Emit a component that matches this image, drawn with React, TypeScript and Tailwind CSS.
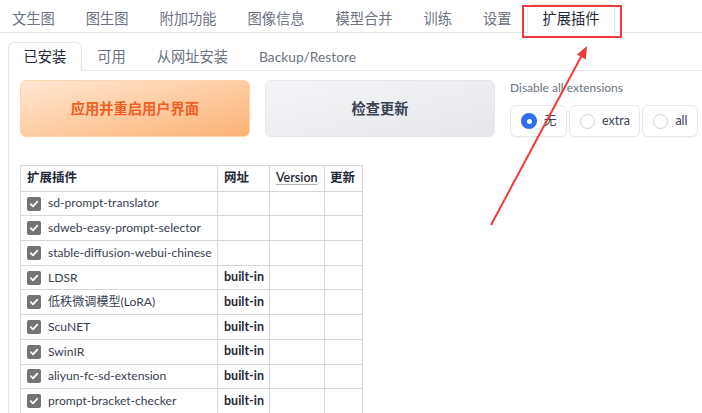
import React from "react";

const topTabs = ["文生图", "图生图", "附加功能", "图像信息", "模型合并", "训练", "设置", "扩展插件"];
const subTabs = ["已安装", "可用", "从网址安装", "Backup/Restore"];

const extensions = [
  { name: "sd-prompt-translator", url: "" },
  { name: "sdweb-easy-prompt-selector", url: "" },
  { name: "stable-diffusion-webui-chinese", url: "" },
  { name: "LDSR", url: "built-in" },
  { name: "低秩微调模型(LoRA)", url: "built-in" },
  { name: "ScuNET", url: "built-in" },
  { name: "SwinIR", url: "built-in" },
  { name: "aliyun-fc-sd-extension", url: "built-in" },
  { name: "prompt-bracket-checker", url: "built-in" },
];

function Check() {
  return (
    <span className="flex h-[14px] w-[14px] shrink-0 items-center justify-center rounded-[2px] bg-[#747474]">
      <svg width="10" height="10" viewBox="0 0 10 10" fill="none">
        <path d="M1.8 5.2 4 7.4 8.3 2.6" stroke="white" strokeWidth="1.7" strokeLinecap="round" strokeLinejoin="round" />
      </svg>
    </span>
  );
}

function Radio({ label, selected }: { label: string; selected?: boolean }) {
  return (
    <div className="flex h-[32px] shrink-0 items-center gap-[7px] rounded-md border border-[#e5e7eb] bg-white pl-[10px] pr-[9.5px] shadow-[0_1px_1px_rgba(0,0,0,0.03)]">
      {selected ? (
        <span className="flex h-[16px] w-[16px] items-center justify-center rounded-full bg-[#2f6fed]">
          <span className="h-[5px] w-[5px] rounded-full bg-white" />
        </span>
      ) : (
        <span className="h-[15px] w-[15px] rounded-full border border-[#d1d5db] bg-white" />
      )}
      <span className="text-[12.5px] text-[#374151]">{label}</span>
    </div>
  );
}

export default function App() {
  return (
    <div
      className="relative h-[413px] w-[702px] overflow-hidden bg-white"
      style={{ fontFamily: 'Lato, "Noto Sans CJK SC", sans-serif' }}
    >
      {/* main tabs */}
      <div className="-ml-[3.5px] mt-[4px] flex border-b border-[#e5e7eb]">
        {topTabs.map((t, i) => {
          const active = i === topTabs.length - 1;
          return (
            <div
              key={t}
              className={
                "-mb-px flex h-[29px] shrink-0 items-center whitespace-nowrap rounded-t-md border border-b-0 px-[14.5px] text-[14.25px] " +
                (active ? "border-[#e5e7eb] bg-white text-[#1f2937]" : "border-transparent text-[#6b7280]")
              }
            >
              {t}
            </div>
          );
        })}
      </div>

      <div className="ml-[8px] mt-[9px]">
        {/* sub tabs */}
        <div className="flex border-b border-[#e5e7eb]">
          {subTabs.map((t, i) => (
            <div
              key={t}
              className={
                "-mb-px flex h-[29px] shrink-0 items-center whitespace-nowrap rounded-t-md border border-b-0 px-[14.5px] " +
                (i === 3 ? "text-[13.8px] " : "text-[14.25px] ") +
                (i === 0 ? "border-[#e5e7eb] bg-white text-[#1f2937]" : "border-transparent text-[#6b7280]")
              }
            >
              {t}
            </div>
          ))}
        </div>

        <div className="h-[400px] border-l border-[#e5e7eb] pl-[11px] pt-[9px]">
          <div className="flex gap-[15px]">
            <button className="h-[57px] w-[230px] shrink-0 rounded-md border border-[#fdd5ae] bg-gradient-to-br from-[#fee7d2] to-[#fbb273] text-[14.25px] font-semibold text-[#ee5f25]">
              应用并重启用户界面
            </button>
            <button className="h-[57px] w-[230px] shrink-0 rounded-md border border-[#e5e7eb] bg-gradient-to-br from-[#f4f5f7] to-[#e6e7ea] text-[14.25px] font-semibold text-[#374151]">
              检查更新
            </button>
            <div className="flex shrink-0 flex-col">
              <span className="h-[16px] whitespace-nowrap text-[12px] leading-[16px] text-[#6b7280]">Disable all extensions</span>
              <div className="mt-[9px] flex gap-[2px]">
                <Radio label="无" selected />
                <Radio label="extra" />
                <Radio label="all" />
              </div>
            </div>
          </div>

          <table className="mt-[28px] w-[342px] table-fixed border-collapse whitespace-nowrap text-[12.1px] text-[#374151]">
            <colgroup>
              <col className="w-[197px]" />
              <col className="w-[52px]" />
              <col className="w-[55px]" />
              <col className="w-[38px]" />
            </colgroup>
            <thead>
              <tr className="h-[25.7px] text-[12.5px]">
                <th className="border border-[#d8d8d8] px-[6px] text-left font-semibold text-[#1f2937]">扩展插件</th>
                <th className="border border-[#d8d8d8] px-[6px] text-left font-semibold text-[#1f2937]">网址</th>
                <th className="border border-[#d8d8d8] px-[6px] text-left font-semibold text-[#1f2937]">
                  <span className="underline decoration-[#b0b5bd] underline-offset-2">Version</span>
                </th>
                <th className="border border-[#d8d8d8] px-[5px] text-left font-semibold text-[#1f2937]">更新</th>
              </tr>
            </thead>
            <tbody>
              {extensions.map((e) => (
                <tr key={e.name} className="h-[24.7px]">
                  <td className="border border-[#d8d8d8] px-[6px]">
                    <div className="flex items-center gap-[7px]">
                      <Check />
                      <span>{e.name}</span>
                    </div>
                  </td>
                  <td className="border border-[#d8d8d8] px-[6px] text-[12.5px] font-bold text-[#1f2937]">{e.url}</td>
                  <td className="border border-[#d8d8d8]" />
                  <td className="border border-[#d8d8d8]" />
                </tr>
              ))}
            </tbody>
          </table>
        </div>
      </div>

      {/* annotation */}
      <div className="pointer-events-none absolute left-[522px] top-[5px] h-[33px] w-[100px] border-2 border-[#ee3a3a]" />
      <svg className="pointer-events-none absolute left-0 top-0" width="702" height="413">
        <line x1="491" y1="225" x2="582" y2="55" stroke="#ee3a3a" strokeWidth="2" />
        <polygon points="587,46 585.8,59.5 577,54.5" fill="#ee3a3a" />
      </svg>
    </div>
  );
}
